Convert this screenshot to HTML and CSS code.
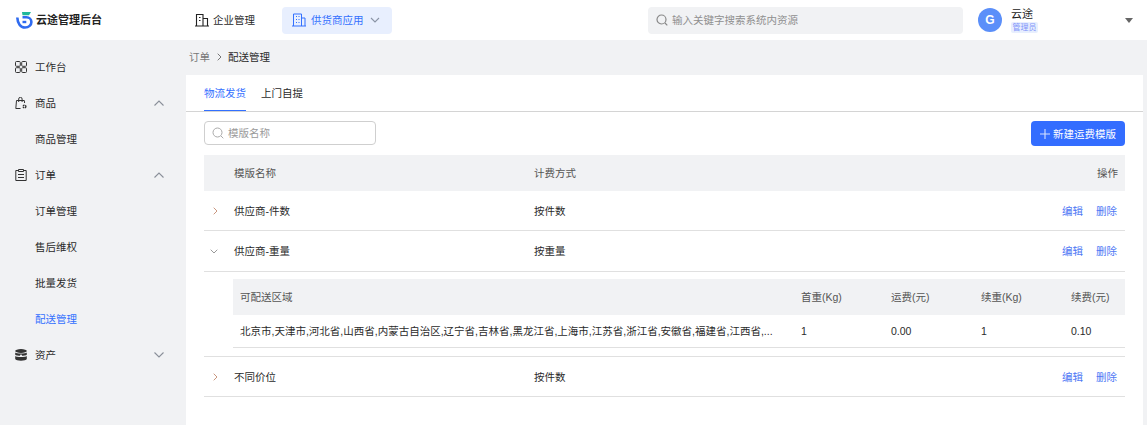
FILE: index.html
```html
<!DOCTYPE html>
<html lang="zh-CN">
<head>
<meta charset="utf-8">
<title>配送管理</title>
<link rel="stylesheet" href="styles.css">
</head>
<body>
<header class="topbar">
  <div class="logo">
    <svg class="logo-mark" viewBox="0 0 18 18" width="18" height="18"><path d="M6 1h9l-2 3.300H6.500z" fill="#1fb89a"/><path d="M1.300 6.500c.2 5.800 3.200 10 7.700 10 3.900 0 6.400-2.600 6.400-5.500 0-2.800-2.200-4.700-5-4.700H6.500" fill="none" stroke="#2f6bf0" stroke-width="2.600"/><path d="M6.500 11h3.800" stroke="#2f6bf0" stroke-width="2.400"/></svg>
    <span>云途管理后台</span>
  </div>
  <nav class="topnav">
    <a class="topnav-item">
      <svg viewBox="0 0 14 14" width="14" height="14" fill="none" stroke="#222" stroke-width="1.100"><path d="M1.500 13V1.500h6.500V13M8 5.500h4.500V13M0 13h14M4 4.500h1.500M4 7.500h1.500"/></svg>
      <span>企业管理</span>
    </a>
    <a class="topnav-item active">
      <svg viewBox="0 0 14 14" width="14" height="14" fill="none" stroke="#3370ff" stroke-width="1"><path d="M1.500 13V1h8v12M9.500 5h3.500v8M0 13h14M4 3.500h1M6.500 3.500h1M4 6.500h1M6.500 6.500h1M4 9.500h1M6.500 9.500h1"/></svg>
      <span>供货商应用</span>
      <svg class="chev-sm" viewBox="0 0 10 6" width="10" height="6" fill="none" stroke="#8a94a6" stroke-width="1.100"><path d="M1 1l4 4 4-4"/></svg>
    </a>
  </nav>
  <div class="global-search">
    <svg viewBox="0 0 12 12" width="12" height="12" fill="none" stroke="#888" stroke-width="1.200"><circle cx="5.500" cy="5.500" r="4.500"/><path d="M9 9l2.300 2.300"/></svg>
    <span>输入关键字搜索系统内资源</span>
  </div>
  <div class="user">
    <div class="avatar">G</div>
    <div class="user-info">
      <div class="user-name">云途</div>
      <div class="user-role">管理员</div>
    </div>
    <div class="caret"></div>
  </div>
</header>
<div class="layout">
  <aside class="sidebar">
    <div class="menu-item">
      <svg class="menu-icon" viewBox="0 0 12 12" fill="none" stroke="#333" stroke-width="1"><rect x=".5" y=".5" width="4.800" height="4.800" rx="1"/><rect x="6.700" y=".5" width="4.800" height="4.800" rx="1"/><rect x=".5" y="6.700" width="4.800" height="4.800" rx="1"/><rect x="6.700" y="6.700" width="4.800" height="4.800" rx="1"/></svg>
      <span>工作台</span>
    </div>
    <div class="menu-item">
      <svg class="menu-icon" viewBox="0 0 12 12" fill="none" stroke="#333" stroke-width="1"><path d="M5.500 11.500H.8L1.500 3.500h7.800l.3 2.500M3.700 5V2a1.700 1.700 0 0 1 3.400 0v3"/><circle cx="9.500" cy="9.500" r="1.400" stroke-dasharray="1.600 .6" stroke-width="1.400"/></svg>
      <span>商品</span>
      <svg class="menu-chev" viewBox="0 0 10 6" fill="none" stroke="#8a8f99" stroke-width="1.100"><path d="M.5 5.500L5 1l4.500 4.500"/></svg>
    </div>
    <div class="menu-item sub">商品管理</div>
    <div class="menu-item">
      <svg class="menu-icon" viewBox="0 0 12 12" fill="none" stroke="#333" stroke-width="1"><path d="M3.500 1.500H.8v10h10.400v-10H8.500M3.500.5h5v2h-5zM3 5.500h6M3 8.500h6"/></svg>
      <span>订单</span>
      <svg class="menu-chev" viewBox="0 0 10 6" fill="none" stroke="#8a8f99" stroke-width="1.100"><path d="M.5 5.500L5 1l4.500 4.500"/></svg>
    </div>
    <div class="menu-item sub">订单管理</div>
    <div class="menu-item sub">售后维权</div>
    <div class="menu-item sub">批量发货</div>
    <div class="menu-item sub current">配送管理</div>
    <div class="menu-item">
      <svg class="menu-icon" viewBox="0 0 12 12"><ellipse cx="6" cy="2" rx="5.800" ry="1.900" fill="#333"/><path d="M.2 3.400C1 4.800 11 4.800 11.800 3.400v2.300C11 7.100 1 7.100.2 5.700zM.2 7C1 8.400 11 8.400 11.800 7v3c-.8 2.300-10.800 2.300-11.600 0z" fill="#333"/><circle cx="6" cy="6.500" r="1" fill="#f1f2f4"/></svg>
      <span>资产</span>
      <svg class="menu-chev" viewBox="0 0 10 6" fill="none" stroke="#8a8f99" stroke-width="1.100"><path d="M.5.500L5 5l4.500-4.500"/></svg>
    </div>
  </aside>
  <main class="main">
    <div class="breadcrumb">
      <span class="crumb-muted">订单</span>
      <svg viewBox="0 0 5 8" width="5" height="8" fill="none" stroke="#777" stroke-width="1"><path d="M.7.700L4 4 .7 7.300"/></svg>
      <span>配送管理</span>
    </div>
    <section class="panel">
      <div class="tabs">
        <div class="tab active">物流发货</div>
        <div class="tab">上门自提</div>
      </div>
      <div class="body">
        <div class="toolbar">
          <div class="name-search">
            <svg viewBox="0 0 12 12" width="12" height="12" fill="none" stroke="#aaa" stroke-width="1"><circle cx="5.500" cy="5.500" r="4.500"/><path d="M9 9l2.300 2.300"/></svg>
            <span>模版名称</span>
          </div>
          <button class="primary" type="button">
            <svg viewBox="0 0 10 10" width="10" height="10" fill="none" stroke="#d5e2ff" stroke-width="1.100"><path d="M5 0v10M0 5h10"/></svg>
            <span>新建运费模版</span>
          </button>
        </div>
        <div class="row head">
          <span></span><span>模版名称</span><span>计费方式</span><span class="ops-head">操作</span>
        </div>
        <div class="row">
          <svg class="arrow" viewBox="0 0 5 8" fill="none" stroke="#c9967f" stroke-width="1"><path d="M.7.700L4 4 .7 7.300"/></svg>
          <span>供应商-件数</span><span>按件数</span>
          <span class="ops"><a>编辑</a><a>删除</a></span>
        </div>
        <div class="row open">
          <svg class="arrow-down" viewBox="0 0 8 5" fill="none" stroke="#999" stroke-width="1"><path d="M.7.700L4 4 7.300.700"/></svg>
          <span>供应商-重量</span><span>按重量</span>
          <span class="ops"><a>编辑</a><a>删除</a></span>
        </div>
        <div class="detail">
          <div class="detail-table">
            <div class="d-row d-head">
              <span>可配送区域</span><span>首重(Kg)</span><span>运费(元)</span><span>续重(Kg)</span><span>续费(元)</span>
            </div>
            <div class="d-row d-body">
              <span>北京市,天津市,河北省,山西省,内蒙古自治区,辽宁省,吉林省,黑龙江省,上海市,江苏省,浙江省,安徽省,福建省,江西省,...</span><span>1</span><span>0.00</span><span>1</span><span>0.10</span>
            </div>
          </div>
        </div>
        <div class="row">
          <svg class="arrow" viewBox="0 0 5 8" fill="none" stroke="#c9967f" stroke-width="1"><path d="M.7.700L4 4 .7 7.300"/></svg>
          <span>不同价位</span><span>按件数</span>
          <span class="ops"><a>编辑</a><a>删除</a></span>
        </div>
      </div>
    </section>
  </main>
</div>
</body>
</html>
```

FILE: styles.css
```css
* { box-sizing: border-box; }
html, body { height: 100%; }
body {
  margin: 0;
  height: 425px;
  overflow: hidden;
  background: #f1f2f4;
  color: #2a2a2a;
  font: 10.5px/16px "Liberation Sans", "Noto Sans CJK SC", sans-serif;
}
.topbar {
  height: 40px;
  background: #fff;
  display: flex;
  align-items: center;
  padding-left: 16px;
}
.logo {
  width: 179px;
  display: flex;
  align-items: center;
  gap: 2px;
  font-size: 11px;
  font-weight: 700;
  color: #222;
}
.logo-mark { flex: none; }
.topnav { display: flex; align-items: center; gap: 27px; width: 453px; }
.topnav-item { display: flex; align-items: center; gap: 4px; height: 27px; }
.topnav-item.active {
  width: 110px;
  background: #e8effe;
  border-radius: 4px;
  padding-left: 10px;
  color: #3370ff;
}
.topnav-item.active span { margin-left: 1px; }
.chev-sm { margin-left: 2px; }
.global-search {
  width: 315px;
  height: 27px;
  background: #f1f2f4;
  border-radius: 4px;
  display: flex;
  align-items: center;
  gap: 4px;
  padding-left: 8px;
  color: #8f8f8f;
}
.user { margin-left: 15px; flex: 1; display: flex; align-items: center; padding-right: 14px; }
.avatar {
  width: 24px;
  height: 24px;
  border-radius: 50%;
  background: #5b8ff9;
  color: #fff;
  font-weight: 700;
  font-size: 12px;
  line-height: 24px;
  text-align: center;
}
.user-info { margin-left: 9px; flex: 1; }
.user-name { color: #222; line-height: 13px; font-size: 11px; margin-top: 1px; }
.user-role {
  width: 27px;
  height: 11px;
  margin-top: 1px;
  background: #e8effe;
  border-radius: 2px;
  color: #7f93fa;
  font-size: 8px;
  line-height: 11px;
  text-align: center;
}
.caret {
  width: 0;
  height: 0;
  border-left: 4px solid transparent;
  border-right: 4px solid transparent;
  border-top: 5px solid #666;
}
.layout { display: flex; height: 385px; }
.sidebar { width: 186px; flex: none; padding-top: 9px; }
.menu-item {
  height: 36px;
  display: flex;
  align-items: center;
  padding-left: 15px;
  padding-bottom: 1px;
}
.menu-item.sub { padding-left: 35px; }
.menu-item.current { color: #3370ff; }
.menu-icon { width: 12px; height: 12px; margin-right: 8px; flex: none; }
.menu-chev { width: 10px; height: 6px; margin-left: auto; margin-right: 22px; }
.main { flex: 1; display: flex; flex-direction: column; padding-right: 4px; min-width: 0; }
.breadcrumb { height: 35px; display: flex; align-items: center; gap: 6.500px; padding-left: 3px; padding-bottom: 2px; }
.crumb-muted { color: #777; }
.panel { flex: 1; background: #fff; }
.tabs { height: 37px; display: flex; gap: 15px; padding-left: 18px; border-bottom: 1px solid #d4d4d4; }
.tab { height: 36px; width: 42px; white-space: nowrap; line-height: 37px; }
.tab.active { color: #3370ff; border-bottom: 1px solid #3370ff; }
.body { padding: 9px 18px 0; }
.toolbar { display: flex; justify-content: space-between; align-items: flex-start; height: 34px; }
.name-search {
  width: 172px;
  height: 24px;
  border: 1px solid #cfcfcf;
  border-radius: 4px;
  display: flex;
  align-items: center;
  gap: 4px;
  padding-left: 7px;
  color: #9a9a9a;
}
.primary {
  width: 94px;
  height: 25px;
  border: 0;
  border-radius: 4px;
  background: #336dff;
  color: #fff;
  font: inherit;
  display: flex;
  align-items: center;
  justify-content: center;
  gap: 3px;
  padding: 0;
}
.row {
  display: grid;
  grid-template-columns: 30px 300px 1fr auto;
  align-items: center;
  height: 40px;
  border-bottom: 1px solid #e0e0e0;
}
.row.open { height: 41px; }
.row.head { height: 36px; background: #f1f2f4; border-bottom: 0; color: #555; }
.ops-head { padding-right: 7px; }
.arrow { width: 5px; height: 8px; margin-left: 9px; }
.arrow-down { width: 8px; height: 5px; margin-left: 6px; }
.ops { display: flex; gap: 13px; padding-right: 8px; }
.ops a { color: #4f78f5; }
.detail { padding: 7px 0 8px 29px; border-bottom: 1px solid #e0e0e0; }
.d-row { display: grid; grid-template-columns: 568px 90px 90px 90px 1fr; align-items: center; }
.d-head { height: 36px; background: #f1f2f4; color: #555; }
.d-body { height: 33px; border-bottom: 1px solid #e0e0e0; }
.d-row span:first-child { padding-left: 7px; white-space: nowrap; }
```
